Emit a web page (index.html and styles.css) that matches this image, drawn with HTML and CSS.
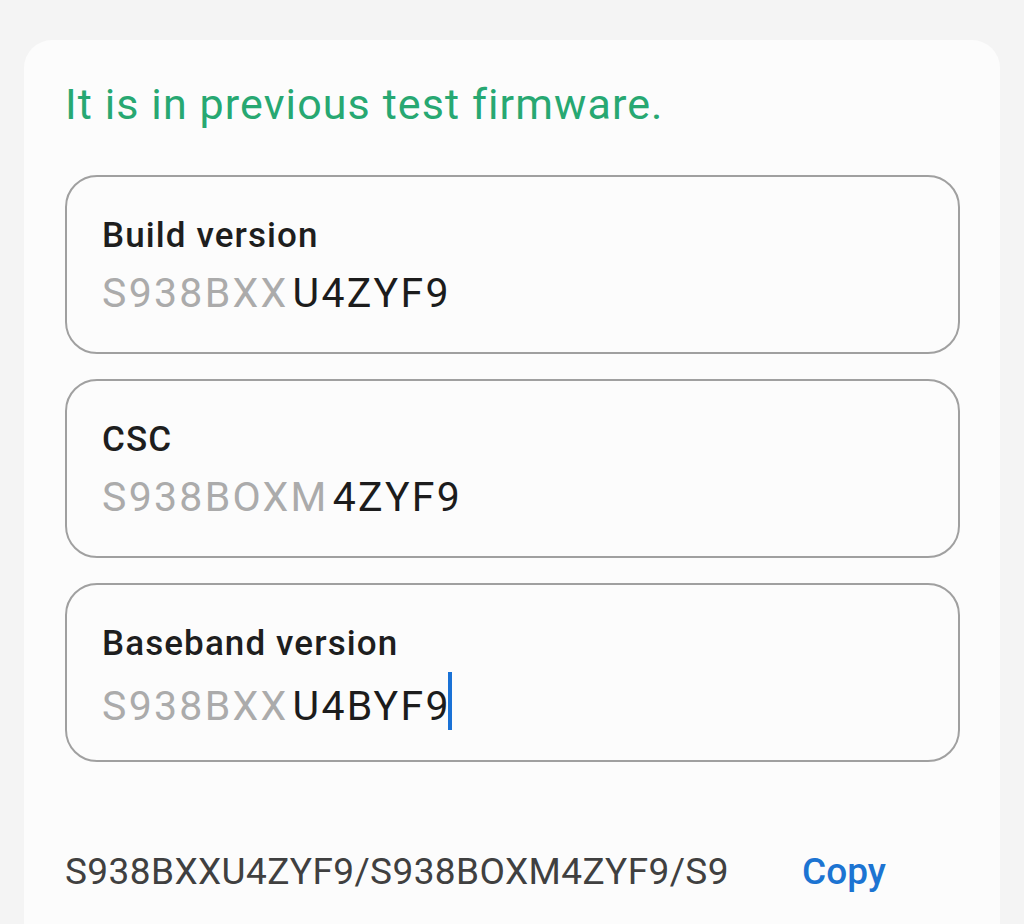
FILE: index.html
```html
<!DOCTYPE html>
<html>
<head>
<meta charset="utf-8">
<link rel="stylesheet" href="styles.css">
</head>
<body>
<div class="card">
  <p class="status">It is in previous test firmware.</p>
  <div class="field">
    <div class="label">Build version</div>
    <div class="value"><span class="prefix">S938BXX</span><span class="suffix">U4ZYF9</span></div>
  </div>
  <div class="field">
    <div class="label">CSC</div>
    <div class="value"><span class="prefix">S938BOXM</span><span class="suffix">4ZYF9</span></div>
  </div>
  <div class="field">
    <div class="label">Baseband version</div>
    <div class="value"><span class="prefix">S938BXX</span><span class="suffix">U4BYF9</span><span class="cursor"></span></div>
  </div>
  <div class="footer">
    <div class="combined">S938BXXU4ZYF9/S938BOXM4ZYF9/S938BXXU4BYF9</div>
    <div class="copy">Copy</div>
  </div>
</div>
</body>
</html>
```

FILE: styles.css
```css
html, body {
  margin: 0;
  padding: 0;
  background: #f4f4f4;
  height: 100%;
  overflow: hidden;
}
body {
  font-family: Roboto, "Noto Sans", sans-serif;
  padding-top: 40px;
  box-sizing: border-box;
}
.card {
  margin-left: 24px;
  width: 976px;
  height: 900px;
  background: #fcfcfc;
  border-radius: 28px 28px 0 0;
  padding: 0 40px 0 41px;
  box-sizing: border-box;
  display: flex;
  flex-direction: column;
}
.status {
  margin: 38px 0 0 0;
  color: #27a872;
  font-size: 43px;
  line-height: 52px;
  letter-spacing: 1.1px;
}
.field {
  margin-top: 45px;
  height: 179px;
  border: 2px solid #a0a0a0;
  border-radius: 32px;
  box-sizing: border-box;
  padding: 39px 0 0 35px;
}
.field + .field {
  margin-top: 25px;
}
.label {
  font-size: 35px;
  font-weight: 500;
  color: #1e1e1e;
  line-height: 40px;
  letter-spacing: 1.1px;
}
.value {
  font-size: 41px;
  line-height: 58px;
  margin-top: 8px;
  display: flex;
  align-items: center;
  letter-spacing: 2.3px;
}
.prefix {
  color: #ababab;
  margin-right: 4px;
}
.suffix {
  color: #1c1c1c;
}
.cursor {
  display: inline-block;
  width: 4px;
  height: 58px;
  background: #1a72d6;
  margin-left: -3px;
  margin-bottom: 10px;
}
.footer {
  margin-top: 88px;
  display: flex;
  align-items: center;
  line-height: 44px;
}
.combined {
  width: 662px;
  overflow: hidden;
  white-space: nowrap;
  font-size: 37px;
  color: #404040;
  letter-spacing: 0.4px;
}
.copy {
  margin-left: 75px;
  font-size: 37px;
  font-weight: 500;
  color: #1c74d2;
}
```
